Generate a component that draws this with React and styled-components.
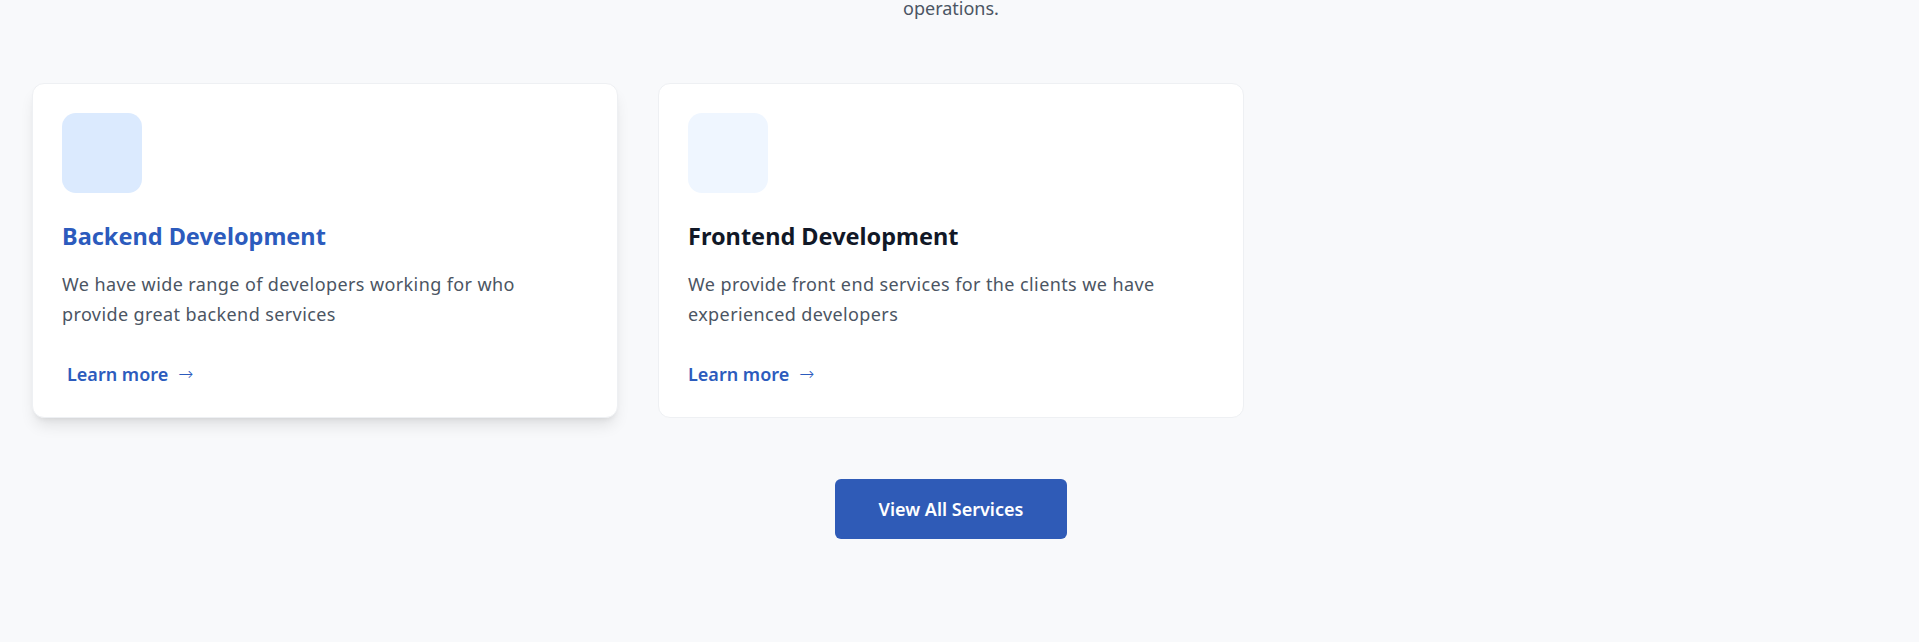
import React from 'react';
import styled, { createGlobalStyle } from 'styled-components';

const GlobalStyle = createGlobalStyle`
  body {
    margin: 0;
    background: #f8f9fb;
    font-family: "Noto Sans", "Open Sans", sans-serif;
  }
`;

// right padding keeps room for the 17px scrollbar gutter of the original page
const Section = styled.section`
  padding: 0 49px 80px 32px;
`;

const Intro = styled.p`
  margin: -7px auto 0;
  text-align: center;
  font-size: 18px;
  line-height: 30px;
  color: #4b5563;
`;

const Grid = styled.div`
  display: grid;
  grid-template-columns: repeat(3, 1fr);
  gap: 40px;
  margin-top: 60px;
`;

const Card = styled.article`
  display: flex;
  flex-direction: column;
  padding: 29px;
  background: #fff;
  border: 1px solid #eef0f3;
  border-radius: 12px;
  box-shadow: ${p => p.$active
    ? '0 10px 15px -3px rgba(0,0,0,0.1), 0 4px 6px -4px rgba(0,0,0,0.1)'
    : 'none'};
`;

const IconBox = styled.div`
  width: 80px;
  height: 80px;
  border-radius: 14px;
  background: ${p => (p.$active ? '#dbeafe' : '#eff6ff')};
`;

const Title = styled.h3`
  margin: 27px 0 0;
  font-size: 23.5px;
  line-height: 32px;
  font-weight: 700;
  color: ${p => (p.$active ? '#2c5bbd' : '#111827')};
`;

const Text = styled.p`
  max-width: 500px;
  margin: 17px 0 0;
  font-size: 18px;
  line-height: 30px;
  letter-spacing: 0.4px;
  color: #4b5563;
`;

const LearnMore = styled.a`
  align-self: flex-start;
  display: inline-flex;
  align-items: center;
  gap: 10px;
  margin-top: 31px;
  font-size: 18px;
  line-height: 28px;
  font-weight: 600;
  color: #2c5bbd;
  text-decoration: none;
  transform: translateX(${p => (p.$active ? 5 : 0)}px);

  span {
    font-family: "DejaVu Sans", sans-serif;
    font-size: 18px;
    font-weight: 200;
  }
`;

const Footer = styled.div`
  display: flex;
  justify-content: center;
  margin-top: 61px;
`;

const Button = styled.a`
  padding: 16px 44px;
  font-size: 18px;
  line-height: 28px;
  font-weight: 600;
  color: #fff;
  background: #2f5bb7;
  border-radius: 6px;
  text-decoration: none;
`;

const services = [
  {
    title: 'Backend Development',
    text: 'We have wide range of developers working for who provide great backend services',
    active: true,
  },
  {
    title: 'Frontend Development',
    text: 'We provide front end services for the clients we have experienced developers',
  },
];

export default function App() {
  return (
    <>
      <GlobalStyle />
      <Section>
        <Intro>operations.</Intro>
        <Grid>
          {services.map(s => (
            <Card key={s.title} $active={s.active}>
              <IconBox $active={s.active} />
              <Title $active={s.active}>{s.title}</Title>
              <Text>{s.text}</Text>
              <LearnMore href="#" $active={s.active}>
                Learn more <span>→</span>
              </LearnMore>
            </Card>
          ))}
        </Grid>
        <Footer>
          <Button href="#">View All Services</Button>
        </Footer>
      </Section>
    </>
  );
}
